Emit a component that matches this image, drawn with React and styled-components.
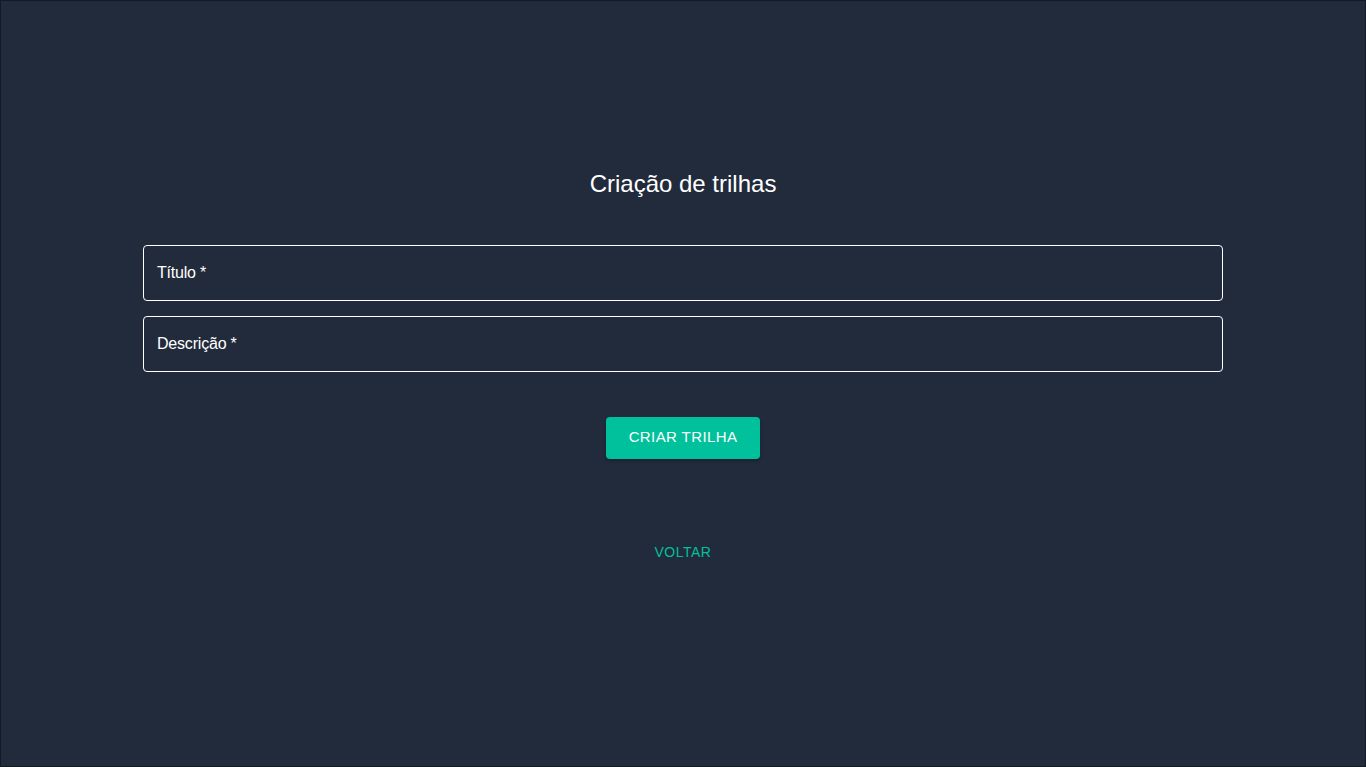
import React, { useState } from 'react';
import styled, { createGlobalStyle } from 'styled-components';

const GlobalStyle = createGlobalStyle`
  html, body {
    margin: 0;
    padding: 0;
    background-color: #212b3c;
  }
  * {
    box-sizing: border-box;
  }
`;

// Contenedor de la página
const Page = styled.div`
  width: 100%;
  height: 767px;
  border: 1px solid #141a24;
  background-color: #212b3c;
  font-family: "Liberation Sans", Arial, sans-serif;
  display: flex;
  flex-direction: column;
  align-items: center;
  padding-top: 169px;
`;

const Title = styled.h1`
  margin: 0;
  color: #ffffff;
  font-size: 24px;
  font-weight: 400;
  line-height: 28px;
`;

const Form = styled.form`
  width: 1080px;
  margin-top: 47px;
  display: flex;
  flex-direction: column;
  gap: 15px;
  align-items: center;
`;

const Field = styled.label`
  width: 100%;
  height: 56px;
  border: 1px solid #ffffff;
  border-radius: 4px;
  display: flex;
  align-items: center;
  padding: 0 11px;
`;

const Input = styled.input`
  flex: 1;
  background: transparent;
  border: none;
  outline: none;
  color: #ffffff;
  font-family: inherit;
  font-size: 16px;
  letter-spacing: -0.2px;

  &::placeholder {
    color: #ffffff;
    opacity: 1;
  }
`;

const SubmitButton = styled.button`
  margin-top: 30px;
  width: 154px;
  height: 42px;
  padding: 0 0 3px;
  border: none;
  border-radius: 4px;
  background-color: #00c19b;
  color: #ffffff;
  font-family: inherit;
  font-size: 15px;
  letter-spacing: 0.4px;
  text-transform: uppercase;
  cursor: pointer;
  box-shadow: 0 2px 3px rgba(0, 0, 0, 0.25);
`;

const BackLink = styled.a`
  margin-top: 85px;
  color: #00c19b;
  font-size: 14px;
  line-height: 16px;
  letter-spacing: 0.5px;
  text-decoration: none;
  text-transform: uppercase;
  cursor: pointer;
`;

function App() {
  const [titulo, setTitulo] = useState('');
  const [descricao, setDescricao] = useState('');

  return (
    <Page>
      <GlobalStyle />
      <Title>Criação de trilhas</Title>
      <Form onSubmit={(e) => e.preventDefault()}>
        <Field>
          <Input
            placeholder="Título *"
            value={titulo}
            onChange={(e) => setTitulo(e.target.value)}
          />
        </Field>
        <Field>
          <Input
            placeholder="Descrição *"
            value={descricao}
            onChange={(e) => setDescricao(e.target.value)}
          />
        </Field>
        <SubmitButton type="submit">Criar trilha</SubmitButton>
      </Form>
      <BackLink>Voltar</BackLink>
    </Page>
  );
}

export default App;
